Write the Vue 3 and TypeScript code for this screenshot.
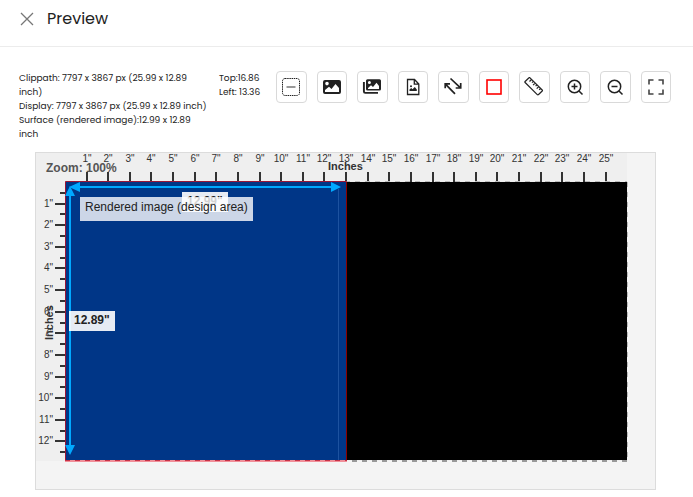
<script setup lang="ts">
const PITCH = 21.62
const ORIGIN = 29

const details: string[] = [
  'Clippath: 7797 x 3867 px (25.99 x 12.89 inch)',
  'Display: 7797 x 3867 px (25.99 x 12.89 inch)',
  'Surface (rendered image):12.99 x 12.89 inch',
]

const columns = Array.from({ length: 25 }, (_, i) => ({ n: i + 1, x: Math.round(ORIGIN + (i + 1) * PITCH) }))
const rows = Array.from({ length: 12 }, (_, i) => ({ n: i + 1, y: Math.round(ORIGIN + (i + 1) * PITCH) }))
const halves = Array.from({ length: 13 }, (_, i) => Math.round(ORIGIN + (i + 0.5) * PITCH))
</script>

<template>
  <div class="preview">
    <header class="bar">
      <button class="close" type="button" aria-label="Close">
        <svg viewBox="0 0 14 14" width="14" height="14"><path d="M1 1L13 13M13 1L1 13" stroke="#777" stroke-width="1.3" fill="none" /></svg>
      </button>
      <h1>Preview</h1>
    </header>

    <section class="info">
      <div class="details">
        <p v-for="line in details" :key="line">{{ line }}</p>
      </div>
      <div class="offset">
        <p>Top:16.86</p>
        <p>Left: 13.36</p>
      </div>
      <div class="tools">
        <button type="button" aria-label="Toggle clip path">
          <svg viewBox="0 0 20 20" fill="none">
            <rect x="1.5" y="1.5" width="17" height="17" rx="2.5" stroke="#222" stroke-dasharray="1.5 .7" />
            <path d="M5.500 10H14.500" stroke="#777" stroke-width="1.500" />
          </svg>
        </button>
        <button type="button" aria-label="Image">
          <svg viewBox="0 0 20 20">
            <path fill="#222" fill-rule="evenodd" d="M3 3H17Q19 3 19 5V15Q19 17 17 17H3Q1 17 1 15V5Q1 3 3 3ZM3 15H17V11L13.5 7L9.5 12L7 9.8L3 13ZM5 4.8A1.8 1.8 0 1 0 5 8.4A1.8 1.8 0 1 0 5 4.8Z" />
          </svg>
        </button>
        <button type="button" aria-label="Images">
          <svg viewBox="0 0 20 20">
            <path fill="#222" fill-rule="evenodd" d="M5.500 2.200H17.500Q19 2.200 19 3.700V12Q19 13.500 17.500 13.500H5.500Q4 13.500 4 12V3.700Q4 2.200 5.500 2.200ZM6 12H17V9L14.500 5.800L11 10L9 8.200L6 11ZM7.400 4A1.500 1.500 0 1 0 7.400 7A1.500 1.500 0 1 0 7.400 4Z" />
            <path d="M1.900 5V14.500Q1.900 15.900 3.300 15.900H16" fill="none" stroke="#222" stroke-width="1.900" />
          </svg>
        </button>
        <button type="button" aria-label="Image file">
          <svg viewBox="0 0 20 20">
            <path d="M4.500 2.500H11.500L15.800 7V17.500H4.500ZM11.300 2.500V7.200H15.800" fill="none" stroke="#222" stroke-width="1.300" />
            <path d="M6.500 14V12.600L8.200 11L9.500 12.200L11.800 10L13.800 12.600V14Z" fill="#222" /><circle cx="8" cy="9.300" r="1" fill="#222" />
          </svg>
        </button>
        <button type="button" aria-label="Resize">
          <svg viewBox="0 0 20 20" fill="none" stroke="#222" stroke-width="1.700">
            <path d="M7.500 1.500L17.500 10.800M17.700 6V11H12.700M2.200 11.300V6.800H7M2.200 6.800L12 16.800" />
          </svg>
        </button>
        <button type="button" aria-label="Design area">
          <svg viewBox="0 0 20 20"><rect x="3" y="3" width="14" height="14" fill="none" stroke="#ff0000" stroke-width="1.600" /></svg>
        </button>
        <button type="button" aria-label="Ruler">
          <svg viewBox="0 0 20 20" fill="none" stroke="#222" stroke-width="1.200">
            <path d="M5 .8Q5.500 .3 6 .8L18.200 13Q18.700 13.500 18.200 14L14.300 17.700Q13.800 18.200 13.300 17.700L1.100 5.500Q.6 5 1.100 4.500ZM7.500 2.500L5.500 4.500M9.300 4.300L8 5.600M11.100 6.100L9.100 8.100M12.900 7.900L11.600 9.200M14.700 9.700L12.700 11.700M16.500 11.500L15.200 12.800" />
          </svg>
        </button>
        <button type="button" aria-label="Zoom in">
          <svg viewBox="0 0 20 20" fill="none" stroke="#222" stroke-width="1.500">
            <circle cx="9.500" cy="9.500" r="6.200" /><path d="M14 14L17.500 17.500M6.500 9.500H12.500M9.500 6.500V12.500" />
          </svg>
        </button>
        <button type="button" aria-label="Zoom out">
          <svg viewBox="0 0 20 20" fill="none" stroke="#222" stroke-width="1.500">
            <circle cx="9.500" cy="9.500" r="6.200" /><path d="M14 14L17.500 17.500M6.500 9.500H12.500" />
          </svg>
        </button>
        <button type="button" aria-label="Full screen">
          <svg viewBox="0 0 20 20" fill="none" stroke="#444" stroke-width="1.600">
            <path d="M3 7.500V3H7.500M12.500 3H17V7.500M17 12.500V17H12.500M7.500 17H3V12.500" />
          </svg>
        </button>
      </div>
    </section>

    <main class="stage">
      <svg class="drawing" viewBox="0 0 619 336" role="img" aria-label="Print area with rulers in inches">
        <rect width="591" height="308" fill="#efefef" />
        <g class="ruler">
          <g v-for="c in columns" :key="'c' + c.n">
            <rect :x="c.x - 1" y="19" width="2" height="10" />
            <text :x="c.x" y="9" text-anchor="middle">{{ c.n }}"</text>
          </g>
          <g v-for="r in rows" :key="'r' + r.n">
            <rect x="19" :y="r.y - 1" width="10" height="2" />
            <text x="17" :y="r.y + 3" text-anchor="end">{{ r.n }}"</text>
          </g>
          <rect v-for="y in halves" :key="'h' + y" x="24" :y="y - 1" width="5" height="2" />
        </g>
        <text class="zoom" x="10" y="19">Zoom: 100%</text>
        <text class="axis" x="292" y="17">Inches</text>
        <text class="axis" transform="translate(17 187) rotate(-90)">Inches</text>

        <rect x="310" y="29" width="281" height="278" fill="#000" />
        <path d="M29 28.500H591M591.500 29V308" fill="none" stroke="#bbb" stroke-dasharray="5 5" />
        <path d="M311 308H592" stroke="#999" stroke-width="2" stroke-dasharray="5 5" stroke-dashoffset="5" />
        <rect x="29" y="29" width="281" height="278" fill="#003687" />
        <path d="M302.500 36V307" stroke="#1d52a0" />
        <path d="M29.500 307V28.500H310.500V307" fill="none" stroke="#9c1434" />
        <path d="M310.500 29V307" stroke="#8b0000" />
        <path d="M29 308H311" stroke="#f0909a" stroke-width="2" />
        <path d="M29 307.500H311" stroke="#c83248" stroke-dasharray="5 5" />

        <g fill="#00a8ff">
          <rect x="40" y="33" width="256" height="2" />
          <path d="M33 34L44 29V39ZM305 34L295 29V39Z" />
          <rect x="33" y="40" width="2" height="255" />
          <path d="M34 33L29 43H39ZM34 302L29 292H39Z" />
        </g>
        <rect x="146" y="39" width="46" height="20" fill="#fff" fill-opacity=".9" />
        <text class="size" x="151" y="52">12.99"</text>
        <rect x="44" y="44" width="173" height="24" fill="#fff" fill-opacity=".8" />
        <text class="caption" x="49" y="58">Rendered image (design area)</text>
        <rect x="33" y="158" width="46" height="20" fill="#fff" fill-opacity=".9" />
        <text class="size" x="38" y="171">12.89"</text>
      </svg>
    </main>
  </div>
</template>

<style>
body {
  margin: 0;
  background: #fff;
}
</style>

<style scoped>
.preview {
  color: #222;
  font-family: Poppins, Inter, "Liberation Sans", sans-serif;
}
.bar {
  display: flex;
  align-items: center;
  gap: 13px;
  height: 38px;
  padding: 0 20px 8px;
  border-bottom: 1px solid #ececec;
}
.close {
  display: flex;
  padding: 0;
  border: 0;
  background: none;
}
h1 {
  margin: 0;
  font-size: 16px;
  font-weight: 400;
  line-height: 24px;
}
.info {
  display: grid;
  grid-template-columns: 188px 45px 1fr;
  gap: 12px;
  padding: 24px 22px 11px 19px;
  font-size: 9px;
  line-height: 14px;
}
.info p {
  margin: 0;
}
.offset {
  white-space: nowrap;
}
.tools {
  display: grid;
  grid-template-columns: repeat(10, 1fr);
  gap: 10px;
  align-self: start;
}
.tools button {
  display: flex;
  align-items: center;
  justify-content: center;
  height: 32px;
  padding: 0;
  border: 1px solid #d9d9d9;
  border-radius: 4px;
  background: #fff;
}
.tools svg {
  flex: none;
  width: 20px;
  height: 20px;
}
.stage {
  margin: 0 37px 7px 35px;
  border: 1px solid #dcdcdc;
  background: #f4f4f4;
}
.drawing {
  display: block;
  width: 100%;
  font-family: "Liberation Sans", Arial, sans-serif;
}
.ruler {
  fill: #333;
  font-size: 10px;
}
.zoom {
  fill: #555;
  font-size: 12px;
  font-weight: 700;
}
.axis {
  fill: #333;
  font-size: 11px;
  font-weight: 700;
}
.size {
  fill: #222;
  font-size: 12px;
  font-weight: 700;
}
.caption {
  fill: #222;
  font-size: 12px;
}
</style>
